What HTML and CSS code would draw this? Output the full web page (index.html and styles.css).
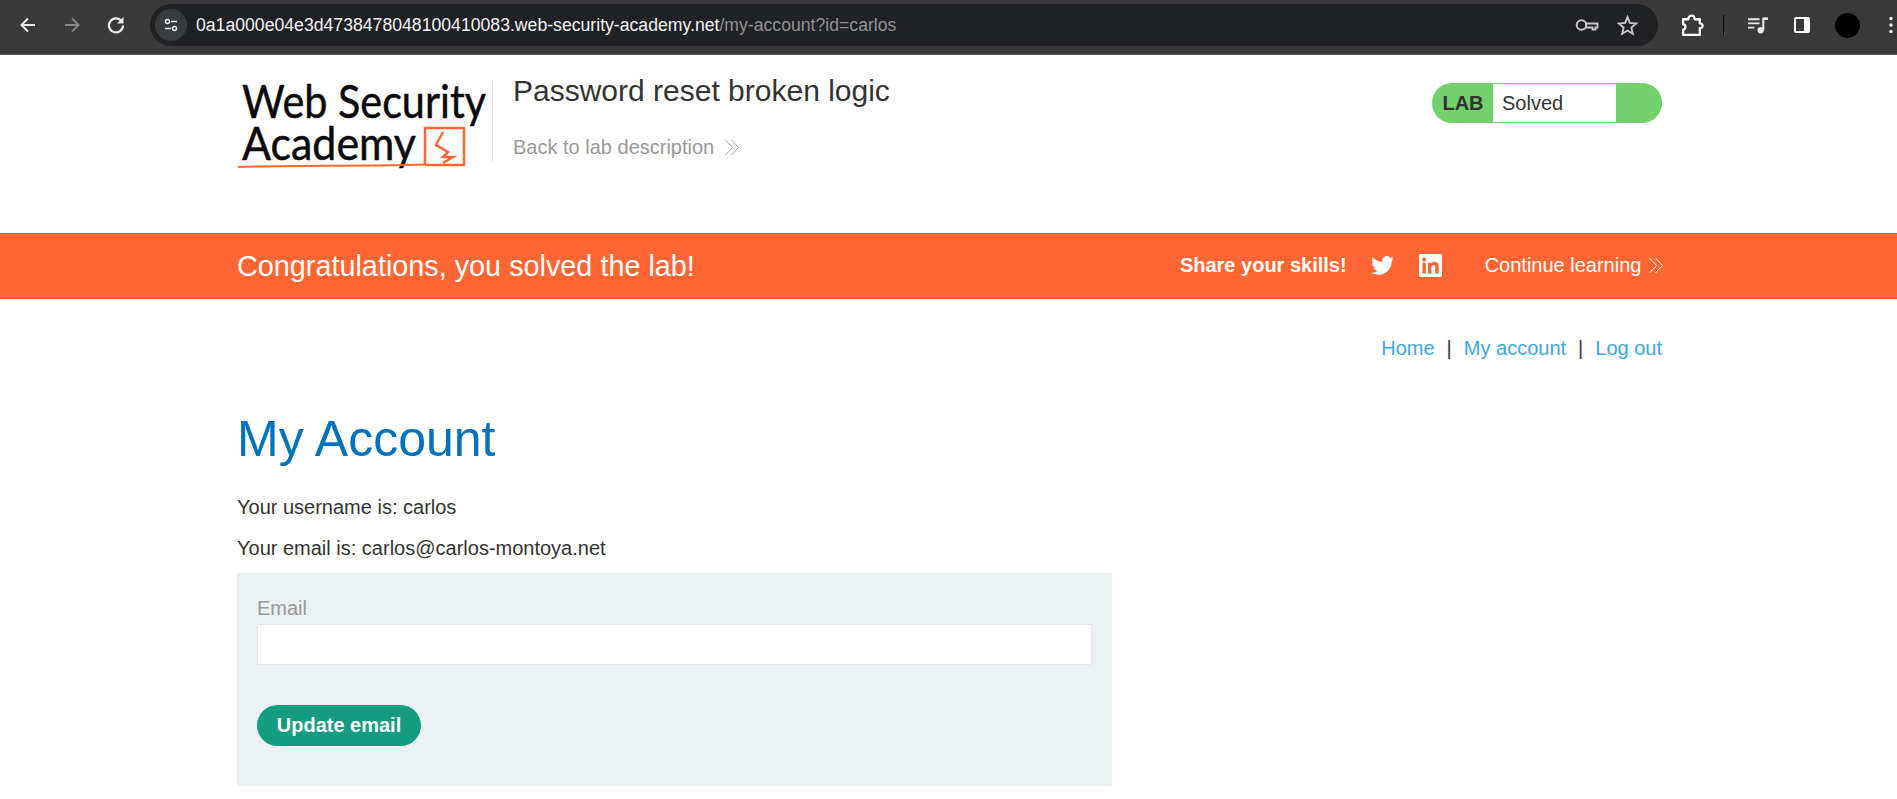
FILE: index.html
```html
<!DOCTYPE html>
<html lang="en">
<head>
<meta charset="utf-8">
<title>Password reset broken logic</title>
<link rel="stylesheet" href="styles.css">
</head>
<body>
<div class="chrome">
  <div class="nav-icons">
    <svg class="nav-icon" viewBox="0 0 20 20"><path d="M17 10H4M10 3.500 3.500 10l6.500 6.500" fill="none" stroke="#e8eaed" stroke-width="2"/></svg>
    <svg class="nav-icon" viewBox="0 0 20 20"><path d="M3 10h13M10 3.500l6.500 6.500-6.500 6.500" fill="none" stroke="#85878a" stroke-width="2"/></svg>
    <svg class="nav-icon" viewBox="0 0 20 20"><path d="M15.500 6a7 7 0 1 0 1.500 4.500" fill="none" stroke="#e8eaed" stroke-width="2.200"/><path d="M17.500 2v6.500h-6.500z" fill="#e8eaed"/></svg>
  </div>
  <div class="omnibox">
    <span class="site-chip"><svg viewBox="0 0 16 16" class="tune"><path d="M8 4.500h6M2 11.500h6" stroke="#e8eaed" stroke-width="1.600"/><circle cx="4.500" cy="4.500" r="2" fill="none" stroke="#e8eaed" stroke-width="1.500"/><circle cx="11.500" cy="11.500" r="2" fill="none" stroke="#e8eaed" stroke-width="1.500"/></svg></span>
    <span class="url">0a1a000e04e3d4738478048100410083.web-security-academy.net<span class="url-path">/my-account?id=carlos</span></span>
    <svg class="omni-icon key" viewBox="0 0 24 14"><circle cx="6.500" cy="7" r="4.800" fill="none" stroke="#c7c7c7" stroke-width="2"/><path d="M11 5.500h11.500v4h-2v2h-3v-2H11z" fill="none" stroke="#c7c7c7" stroke-width="1.800"/></svg>
    <svg class="omni-icon star" viewBox="0 0 20 20"><path d="M10 2l2.300 5.600 6 .5-4.600 3.900 1.400 5.900L10 14.800l-5.100 3.100 1.400-5.900L1.700 8.100l6-.5z" fill="none" stroke="#c7c7c7" stroke-width="1.800"/></svg>
  </div>
  <div class="tool-icons">
    <svg class="tool puzzle" viewBox="0 0 22 22"><path d="M2 5h5c0-4.500 6-4.500 6 0h5v4c3.500-.5 3.500 5 0 4.500V20H2v-5c3 0 3-5 0-5z" fill="none" stroke="#fff" stroke-width="2.200" stroke-linejoin="round"/></svg>
    <span class="tool-sep"></span>
    <svg class="tool media" viewBox="0 0 20 20"><path d="M1 4h11M1 8h11M1 12h6" stroke="#e8eaed" stroke-width="1.800"/><path d="M15.500 3v11" stroke="#e8eaed" stroke-width="2"/><path d="M15 3.500h5" stroke="#e8eaed" stroke-width="2.500"/><circle cx="13" cy="14.500" r="3" fill="#e8eaed"/></svg>
    <svg class="tool panel" viewBox="0 0 18 18"><rect x="1" y="1" width="16" height="16" rx="2" fill="#fff"/><rect x="3" y="3" width="8" height="12" fill="#3a3a3a"/></svg>
    <span class="avatar"></span>
    <svg class="tool kebab" viewBox="0 0 4 18"><circle cx="2" cy="2.500" r="1.700" fill="#e8eaed"/><circle cx="2" cy="9" r="1.700" fill="#e8eaed"/><circle cx="2" cy="15.500" r="1.700" fill="#e8eaed"/></svg>
  </div>
</div>

<header class="lab-header">
  <div class="wrap lab-header-row">
    <svg class="logo" viewBox="0 0 250 88" role="img" aria-label="Web Security Academy">
      <text x="5" y="35" class="logo-text" textLength="244" lengthAdjust="spacingAndGlyphs">Web Security</text>
      <text x="5" y="77" class="logo-text" textLength="174" lengthAdjust="spacingAndGlyphs">Academy</text>
      <path d="M1 84C60 82 120 83.500 187 81.500" fill="none" stroke="#ff6633" stroke-width="2"/>
      <path d="M188 82V45h39v37H188" fill="none" stroke="#ff6633" stroke-width="2.500"/>
      <path d="M206 49l-7 13 12 7-5 5h10l-10 6" fill="none" stroke="#ff6633" stroke-width="2.500"/>
    </svg>
    <div class="lab-title-block">
      <h2 class="lab-title">Password reset broken logic</h2>
      <a class="back-link" href="#">Back to lab description <svg class="chev chev-grey" viewBox="0 0 15 15"><path d="M.5 0l7 7.500-7 7.500M6.500 0l7 7.500-7 7.500" fill="none" stroke="#a3a3a3"/></svg></a>
    </div>
    <div class="status">
      <span class="status-lab">LAB</span>
      <span class="status-text">Solved</span>
      <span class="status-end"></span>
    </div>
  </div>
</header>

<section class="banner">
  <div class="wrap banner-row">
    <h4 class="banner-msg">Congratulations, you solved the lab!</h4>
    <div class="banner-side">
      <strong class="share">Share your skills!</strong>
      <svg class="social twitter" viewBox="0 0 24 24"><path fill="#fff" d="M23.950 4.570a10 10 0 0 1-2.820.770 4.960 4.960 0 0 0 2.160-2.720c-.950.550-2 .950-3.130 1.180a4.920 4.920 0 0 0-8.380 4.480C7.690 8.090 4.070 6.130 1.640 3.160a4.820 4.820 0 0 0-.660 2.470c0 1.710.870 3.210 2.190 4.100a4.900 4.900 0 0 1-2.230-.620v.060a4.920 4.920 0 0 0 3.950 4.830 5 5 0 0 1-2.210.080 4.940 4.940 0 0 0 4.600 3.420A9.870 9.870 0 0 1 0 19.540a14 14 0 0 0 7.560 2.210c9.050 0 14-7.500 14-13.980 0-.210 0-.420-.020-.630a9.940 9.940 0 0 0 2.460-2.550z"/></svg>
      <svg class="social linkedin" viewBox="0 0 24 24"><path fill="#fff" fill-rule="evenodd" d="M1.500 0h21A1.500 1.500 0 0 1 24 1.500v21a1.500 1.500 0 0 1-1.500 1.500h-21A1.500 1.500 0 0 1 0 22.500v-21A1.500 1.500 0 0 1 1.500 0zM3.600 9v11.400h3.600V9zM5.400 3.600a2.100 2.100 0 1 0 0 4.200 2.100 2.100 0 0 0 0-4.200zM9.300 9v11.400h3.600v-5.800c0-1.500.4-3 2.200-3s1.900 1.700 1.900 3.100v5.700h3.600v-6.400c0-3.100-.7-5.800-4.300-5.800-1.700 0-2.900 1-3.400 1.900V9z"/></svg>
      <a class="continue" href="#">Continue learning <svg class="chev chev-white" viewBox="0 0 15 15"><path d="M.5 0l7 7.500-7 7.500M6.500 0l7 7.500-7 7.500" fill="none" stroke="#fff"/></svg></a>
    </div>
  </div>
</section>

<main class="wrap">
  <nav class="top-links">
    <a href="#">Home</a><span class="pipe">|</span><a href="#">My account</a><span class="pipe">|</span><a href="#">Log out</a>
  </nav>
  <h1 class="page-title">My Account</h1>
  <p class="line line-user">Your username is: carlos</p>
  <p class="line line-email">Your email is: carlos@carlos-montoya.net</p>
  <form class="email-form">
    <label class="field-label" for="email">Email</label>
    <input class="field-input" id="email" type="email">
    <button class="submit" type="button">Update email</button>
  </form>
</main>
</body>
</html>
```
FILE: styles.css
```css
* { box-sizing: border-box; }
html, body { margin: 0; padding: 0; }
body {
  height: 799px;
  overflow: hidden;
  background: #fff;
  color: #333332;
  font-family: "Liberation Sans", Arial, sans-serif;
  font-size: 20px;
}
a { text-decoration: none; }

.chrome {
  height: 55px;
  background: #3a3a3a;
  border-bottom: 1px solid #5a5a5a;
  display: flex;
  align-items: center;
  padding-bottom: 4px;
}
.nav-icons { display: flex; gap: 24px; padding-left: 18px; width: 150px; }
.nav-icon { width: 20px; height: 20px; }
.omnibox {
  width: 1508px;
  height: 42px;
  background: #202124;
  border-radius: 21px;
  display: flex;
  align-items: center;
  padding: 0 20px 0 5px;
  color: #fff;
  font-size: 17.650px;
}
.site-chip {
  width: 32px; height: 32px; border-radius: 50%;
  background: #3a3b3e;
  display: flex; align-items: center; justify-content: center;
  margin-right: 9px;
}
.tune { width: 16px; height: 16px; }
.url { flex: 1; white-space: nowrap; color: #f1f3f4; }
.url-path { color: #8f9194; }
.omni-icon { flex: none; }
.key { width: 24px; height: 14px; margin-right: 18px; }
.star { width: 21px; height: 21px; }
.tool-icons { display: flex; align-items: center; flex: 1; padding-left: 23px; }
.tool { flex: none; }
.puzzle { width: 23px; height: 23px; }
.tool-sep { width: 1px; height: 20px; background: #000; margin: 0 23px 0 19px; }
.media { width: 21px; height: 21px; }
.panel { width: 18px; height: 18px; margin-left: 25px; }
.avatar { width: 25px; height: 25px; border-radius: 50%; background: #000; margin-left: 24px; }
.kebab { width: 4px; height: 18px; margin-left: 29px; }

.wrap { width: 1425px; margin-left: 237px; }

.lab-header { height: 178px; }
.lab-header-row { display: flex; align-items: flex-start; padding-top: 28px; }
.logo { width: 250px; height: 88px; overflow: visible; flex: none; margin-right: 5px; }
.logo-text { font-family: "Lato", sans-serif; font-size: 46px; font-weight: 400; fill: #0a0a0a; stroke: #0a0a0a; stroke-width: .5px; }
.lab-title-block {
  border-left: 1px solid #e6e6e6;
  height: 80px;
  padding-left: 20px;
  flex: 1;
  margin-top: -1px;
}
.lab-title { margin: -10px 0 0; font-size: 30px; font-weight: 400; line-height: 38px; color: #333332; }
.back-link { display: block; margin-top: 25px; color: #999; font-size: 20px; line-height: 24px; }
.chev { display: inline-block; vertical-align: -1px; }
.chev-grey { width: 15px; height: 15px; margin-left: 5px; }
.status {
  width: 230px; height: 40px;
  border-radius: 20px;
  background: #70d16d;
  display: flex;
  padding: 1px 0;
  flex: none;
}
.status-lab { width: 61px; text-align: center; line-height: 38px; font-size: 20px; font-weight: 700; padding-left: 1px; color: #333332; }
.status-text { width: 123px; background: #fff; line-height: 38px; font-size: 20px; padding-left: 9px; }
.status-end { flex: 1; }

.banner { height: 66px; background: #ff6633; color: #fff; }
.banner-row { display: flex; align-items: center; height: 100%; justify-content: space-between; }
.banner-msg { margin: 0; font-size: 28.800px; font-weight: 400; }
.banner-side { display: flex; align-items: center; margin-top: -2px; }
.share { font-size: 20px; }
.social { width: 23px; height: 23px; }
.twitter { margin-left: 24px; }
.linkedin { margin-left: 25px; }
.continue { color: #fff; font-size: 20px; margin-left: 43px; margin-right: -2px; }
.chev-white { width: 15px; height: 15px; margin-left: 2px; }

.top-links { display: flex; justify-content: flex-end; padding-top: 37px; font-size: 20px; line-height: 24px; }
.top-links a { color: #3ba7e3; }
.pipe { margin: 0 12px; color: #333332; }
.page-title { margin: 47px 0 0; color: #0071bc; font-size: 50px; font-weight: 400; line-height: 64px; }
.line { margin: 0; font-size: 20px; line-height: 24px; }
.line-user { margin-top: 24px; }
.line-email { margin-top: 17px; }
.email-form {
  width: 875px;
  height: 213px;
  margin-top: 13px;
  background: #ebf0f2;
  padding: 23px 20px 0;
}
.field-label { display: block; color: #999; font-size: 20px; line-height: 24px; }
.field-input {
  display: block;
  width: 100%;
  height: 41px;
  margin-top: 4px;
  border: 1px solid #e6e6e6;
  background: #fff;
  outline: 0;
}
.submit {
  display: block;
  width: 164px;
  height: 41px;
  margin-top: 40px;
  border: 0;
  border-radius: 21px;
  background: #159b80;
  color: #fff;
  font-family: inherit;
  font-size: 20px;
  font-weight: 700;
  padding: 0;
}
```
